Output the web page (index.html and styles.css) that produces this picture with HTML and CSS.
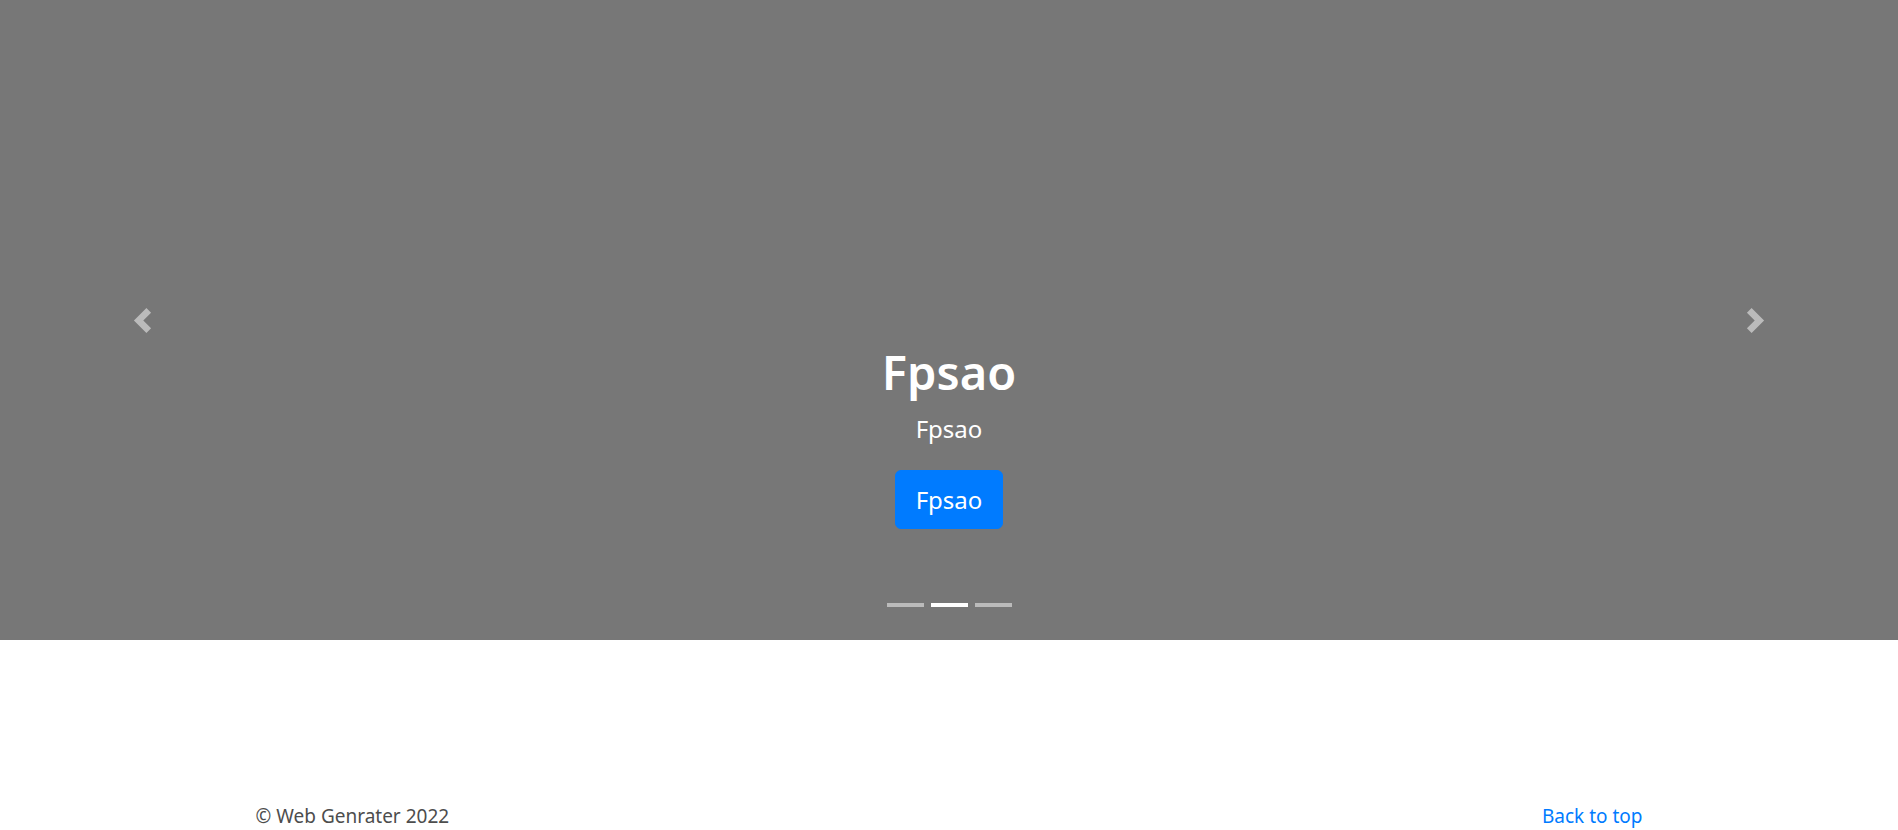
FILE: index.html
```html
<!DOCTYPE html>
<html lang="en">
<head>
<meta charset="utf-8">
<title>Web Genrater</title>
<link rel="stylesheet" href="styles.css">
</head>
<body>
<main>
  <div class="carousel">
    <a class="control control-prev" href="#">
      <svg class="control-icon" viewBox="0 0 8 8" aria-hidden="true"><path d="M5.25 0l-4 4 4 4 1.5-1.5L4.25 4l2.5-2.5L5.25 0z"/></svg>
    </a>
    <div class="caption">
      <h1 class="caption-title">Fpsao</h1>
      <p class="caption-text">Fpsao</p>
      <p class="caption-action"><a class="btn" href="#">Fpsao</a></p>
    </div>
    <a class="control control-next" href="#">
      <svg class="control-icon" viewBox="0 0 8 8" aria-hidden="true"><path d="M2.75 0l-1.5 1.5L3.75 4l-2.5 2.5L2.75 8l4-4-4-4z"/></svg>
    </a>
    <ol class="indicators">
      <li class="indicator"></li>
      <li class="indicator active"></li>
      <li class="indicator"></li>
    </ol>
  </div>
  <footer class="footer">
    <p class="copy">&copy; Web Genrater 2022</p>
    <p class="back"><a href="#">Back to top</a></p>
  </footer>
</main>
</body>
</html>
```

FILE: styles.css
```css
* { box-sizing: border-box; }

html, body {
  margin: 0;
  padding: 0;
}

body {
  font-family: "Noto Sans", "Open Sans", "Liberation Sans", sans-serif;
  color: #212529;
  background: #fff;
  font-size: 19px;
  line-height: 1.5;
}

.carousel {
  position: relative;
  height: 640px;
  background: #777;
  margin-bottom: 161px;
}

.control {
  position: absolute;
  top: 0;
  bottom: 0;
  width: 15%;
  display: flex;
  align-items: center;
  justify-content: center;
}

.control-prev { left: 0; }
.control-next { right: 0; }

.control-icon {
  width: 25px;
  height: 25px;
  fill: #fff;
  opacity: 0.5;
}

.caption {
  position: absolute;
  left: 15%;
  right: 15%;
  bottom: 66px;
  padding: 25px 0;
  display: flex;
  flex-direction: column;
  align-items: center;
  text-align: center;
  color: #fff;
}

.caption-title {
  margin: 0 0 8px;
  font-size: 47px;
  font-weight: 600;
  line-height: 60px;
}

.caption-text {
  margin: 0 0 22px;
  font-size: 24px;
  line-height: 37.5px;
}

.caption-action {
  margin: 0 0 20px;
  display: flex;
}

.btn {
  display: block;
  padding: 10px 20px;
  font-size: 24px;
  line-height: 37.5px;
  color: #fff;
  background: #007bff;
  border: 1px solid #007bff;
  border-radius: 6px;
  text-decoration: none;
}

.indicators {
  position: absolute;
  left: 0;
  right: 0;
  bottom: 20px;
  margin: 0;
  padding: 0;
  list-style: none;
  display: flex;
  justify-content: center;
  gap: 7px;
}

.indicator {
  width: 37px;
  height: 4px;
  margin-bottom: 13px;
  background: #fff;
  opacity: 0.5;
}

.indicator.active { opacity: 1; }

.footer {
  max-width: 1425px;
  margin: 0 auto;
  padding: 0 19px;
  display: flex;
  justify-content: space-between;
}

.footer p {
  margin: 0 0 20px;
  line-height: 30px;
}

.copy { color: #4d4d4d; }

.back a {
  color: #007bff;
  text-decoration: none;
}
```
